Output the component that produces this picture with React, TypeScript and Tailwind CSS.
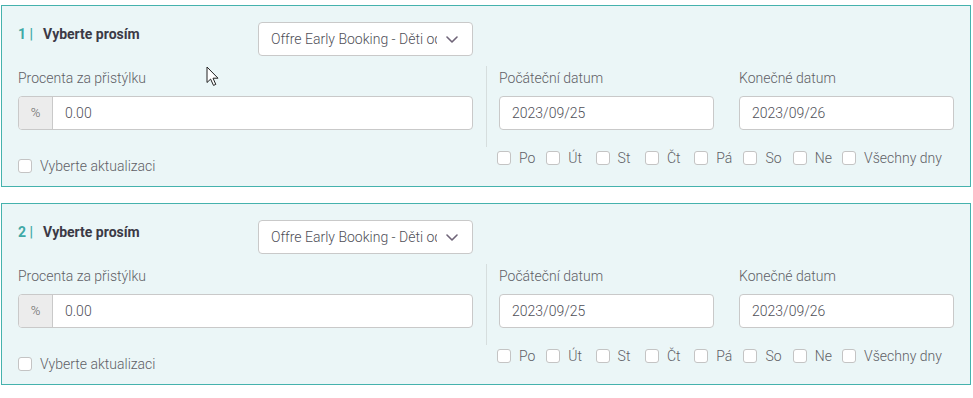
const days = ["Po", "Út", "St", "Čt", "Pá", "So", "Ne", "Všechny dny"];

const Checkbox = ({ label }: { label: string }) => (
  <label className="flex items-center gap-[8px] text-[14px] leading-[20px] font-light text-[#5f5f66]">
    <span className="w-[14px] h-[14px] shrink-0 rounded-[3px] border border-[#c4c4c4] bg-white" />
    <span>{label}</span>
  </label>
);

const Chevron = () => (
  <svg width="12" height="7" viewBox="0 0 12 7" fill="none" className="shrink-0">
    <path d="M1 1l5 5 5-5" stroke="#6f6478" strokeWidth="1.6" strokeLinecap="round" strokeLinejoin="round" />
  </svg>
);

const Cursor = () => (
  <svg width="13" height="20" viewBox="0 0 13 20" className="absolute left-[204px] top-[60px]">
    <path
      d="M1 1v15.5l3.6-3.4 2.9 6.3 2.3-1-2.8-6.2h5z"
      fill="white"
      stroke="#222"
      strokeWidth="1"
      strokeLinejoin="round"
    />
  </svg>
);

const OfferCard = ({ index, cursor }: { index: number; cursor?: boolean }) => (
  <div className="relative w-[970px] h-[182px] border border-[#45b2ad] bg-[#ebf6f7] px-4">
    {cursor && <Cursor />}
    <div className="flex pt-[16px]">
      <div className="w-[240px] pt-[2px] text-[14px] leading-[20px] font-bold">
        <span className="text-[#3fa9a6]">{index} |</span>
        <span className="ml-[10px] text-[#3b3a46]">Vyberte prosím</span>
      </div>
      <div className="w-[215px] h-[34px] flex items-center justify-between rounded-[4px] border border-[#c9c9c9] bg-white pl-[12px] pr-[14px]">
        <span className="w-[166px] overflow-hidden whitespace-nowrap text-[14px] font-light text-[#4f4f58]">
          Offre Early Booking - Děti od 2 do 12 let
        </span>
        <Chevron />
      </div>
    </div>

    <div className="grid grid-cols-2 mt-[10px]">
      <div className="pr-[13px] pt-[2px] pb-[17px]">
        <div className="text-[14px] leading-[20px] font-light text-[#5f5f66] mb-[8px]">Procenta za přistýlku</div>
        <div className="flex h-[34px] rounded-[4px] border border-[#c9c9c9] bg-white overflow-hidden">
          <div className="w-[34px] flex items-center justify-center bg-[#ececec] border-r border-[#c9c9c9] text-[13px] font-light text-[#666]">
            %
          </div>
          <div className="flex items-center pl-[12px] text-[14px] font-light text-[#4f4f58]">0.00</div>
        </div>
      </div>
      <div className="border-l border-[#d6dede] pl-[12px] pt-[2px] pb-[17px] grid grid-cols-2 gap-[25px]">
        <div>
          <div className="text-[14px] leading-[20px] font-light text-[#5f5f66] mb-[8px]">Počáteční datum</div>
          <div className="h-[34px] flex items-center rounded-[4px] border border-[#c9c9c9] bg-white pl-[12px] text-[14px] font-light text-[#4f4f58]">
            2023/09/25
          </div>
        </div>
        <div>
          <div className="text-[14px] leading-[20px] font-light text-[#5f5f66] mb-[8px]">Konečné datum</div>
          <div className="h-[34px] flex items-center rounded-[4px] border border-[#c9c9c9] bg-white pl-[12px] text-[14px] font-light text-[#4f4f58]">
            2023/09/26
          </div>
        </div>
      </div>
    </div>

    <div className="grid grid-cols-2">
      <div className="mt-[9px]">
        <Checkbox label="Vyberte aktualizaci" />
      </div>
      <div className="flex mt-[1px] pl-[11px]">
        {days.map((d) => (
          <div key={d} className={d === "Všechny dny" ? "" : "w-[49.3px] shrink-0"}>
            <Checkbox label={d} />
          </div>
        ))}
      </div>
    </div>
  </div>
);

const App = () => {
  return (
    <div className="min-h-screen bg-white pt-[5px] pl-[1px]" style={{ fontFamily: "Roboto, 'Noto Sans', sans-serif" }}>
      <div className="flex flex-col gap-4">
        <OfferCard index={1} cursor />
        <OfferCard index={2} />
      </div>
    </div>
  );
};

export default App;
